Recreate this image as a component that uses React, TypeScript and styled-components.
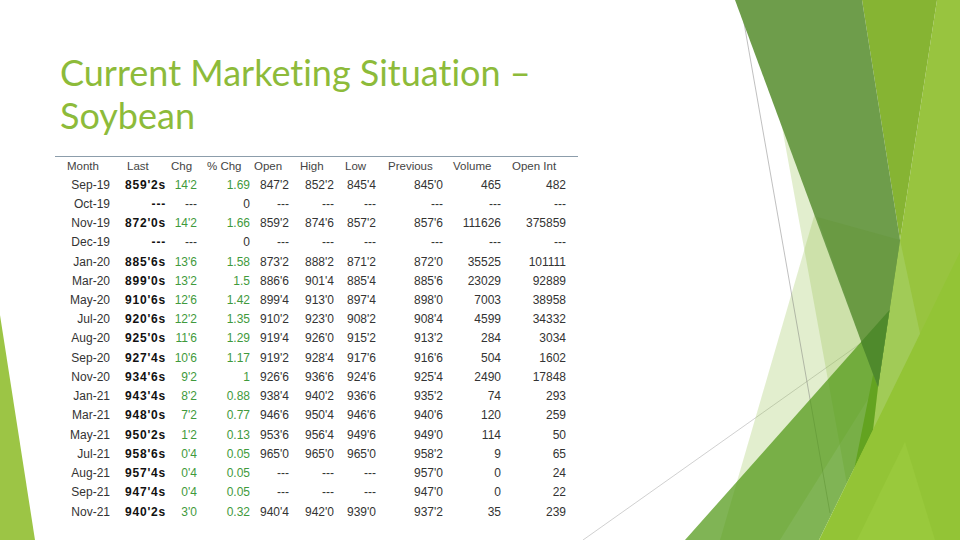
import styled, { createGlobalStyle } from 'styled-components';

const GlobalStyle = createGlobalStyle`
  html, body {
    margin: 0;
    padding: 0;
    background: #ffffff;
  }
  body {
    width: 960px;
    height: 540px;
    overflow: hidden;
  }
`;

// column boundaries measured off the slide: width, header left pad, value right pad
const COLS = [
  { label: 'Month', w: 59, pl: 12, pr: 4 },
  { label: 'Last', w: 54, pl: 13, pr: 2 },
  { label: 'Chg', w: 32, pl: 3, pr: 3 },
  { label: '% Chg', w: 52, pl: 7, pr: 2 },
  { label: 'Open', w: 40, pl: 2, pr: 3 },
  { label: 'High', w: 46, pl: 8, pr: 4 },
  { label: 'Low', w: 42, pl: 7, pr: 4 },
  { label: 'Previous', w: 66, pl: 8, pr: 3 },
  { label: 'Volume', w: 58, pl: 7, pr: 3 },
  { label: 'Open Int', w: 74, pl: 8, pr: 12 },
];

const ROWS: string[][] = [
  ['Sep-19', "859'2s", "14'2", '1.69', "847'2", "852'2", "845'4", "845'0", '465', '482'],
  ['Oct-19', '---', '---', '0', '---', '---', '---', '---', '---', '---'],
  ['Nov-19', "872'0s", "14'2", '1.66', "859'2", "874'6", "857'2", "857'6", '111626', '375859'],
  ['Dec-19', '---', '---', '0', '---', '---', '---', '---', '---', '---'],
  ['Jan-20', "885'6s", "13'6", '1.58', "873'2", "888'2", "871'2", "872'0", '35525', '101111'],
  ['Mar-20', "899'0s", "13'2", '1.5', "886'6", "901'4", "885'4", "885'6", '23029', '92889'],
  ['May-20', "910'6s", "12'6", '1.42', "899'4", "913'0", "897'4", "898'0", '7003', '38958'],
  ['Jul-20', "920'6s", "12'2", '1.35', "910'2", "923'0", "908'2", "908'4", '4599', '34332'],
  ['Aug-20', "925'0s", "11'6", '1.29', "919'4", "926'0", "915'2", "913'2", '284', '3034'],
  ['Sep-20', "927'4s", "10'6", '1.17', "919'2", "928'4", "917'6", "916'6", '504', '1602'],
  ['Nov-20', "934'6s", "9'2", '1', "926'6", "936'6", "924'6", "925'4", '2490', '17848'],
  ['Jan-21', "943'4s", "8'2", '0.88', "938'4", "940'2", "936'6", "935'2", '74', '293'],
  ['Mar-21', "948'0s", "7'2", '0.77', "946'6", "950'4", "946'6", "940'6", '120', '259'],
  ['May-21', "950'2s", "1'2", '0.13', "953'6", "956'4", "949'6", "949'0", '114', '50'],
  ['Jul-21', "958'6s", "0'4", '0.05', "965'0", "965'0", "965'0", "958'2", '9', '65'],
  ['Aug-21', "957'4s", "0'4", '0.05', '---', '---', '---', "957'0", '0', '24'],
  ['Sep-21', "947'4s", "0'4", '0.05', '---', '---', '---', "947'0", '0', '22'],
  ['Nov-21', "940'2s", "3'0", '0.32', "940'4", "942'0", "939'0", "937'2", '35', '239'],
];

const Slide = styled.div`
  position: relative;
  width: 960px;
  height: 540px;
  overflow: hidden;
  background: #ffffff;
`;

const Backdrop = styled.svg`
  position: absolute;
  inset: 0;
  width: 960px;
  height: 540px;
  pointer-events: none;
`;

const Content = styled.div`
  position: relative;
  display: flex;
  flex-direction: column;
  padding: 51px 0 0 55px;
`;

const Title = styled.h1`
  margin: 0 0 19px 5px;
  width: 500px;
  font-family: Lato, 'Open Sans', sans-serif;
  font-weight: 400;
  font-size: 36px;
  line-height: 43px;
  font-variant-ligatures: none;
  color: #8dbb3a;
`;

const Table = styled.div`
  width: 523px;
  border-top: 1.5px solid #8c9dab;
  font-family: 'Liberation Sans', Arial, sans-serif;
`;

const Row = styled.div<{ $head?: boolean }>`
  display: grid;
  grid-template-columns: ${COLS.map((c) => `${c.w}px`).join(' ')};
  height: ${(p) => (p.$head ? '18px' : '19.24px')};
  align-items: center;
  font-size: ${(p) => (p.$head ? '11.5px' : '12px')};
`;

const HeadCell = styled.div<{ $col: number }>`
  padding-left: ${(p) => COLS[p.$col].pl}px;
  color: #444;
  white-space: nowrap;
`;

const Cell = styled.div<{ $col: number; $tone: 'plain' | 'bold' | 'green' }>`
  padding-right: ${(p) => COLS[p.$col].pr}px;
  text-align: right;
  white-space: nowrap;
  color: ${(p) => (p.$tone === 'green' ? '#3f9a3c' : p.$tone === 'bold' ? '#111' : '#333')};
  font-weight: ${(p) => (p.$tone === 'bold' ? 700 : 400)};
  letter-spacing: ${(p) => (p.$tone === 'bold' ? '0.8px' : '0')};
`;

const toneFor = (col: number, value: string): 'plain' | 'bold' | 'green' => {
  if (col === 1) return 'bold';
  if ((col === 2 || col === 3) && value !== '---' && value !== '0') return 'green';
  return 'plain';
};

const Decoration = () => (
  <Backdrop viewBox="0 0 960 540">
    <polygon points="0,315 35,540 0,540" fill="#9cc545" />
    <line x1="583" y1="540" x2="905" y2="312" stroke="#c4c4c4" strokeWidth="0.8" />
    <polygon points="937,0 960,0 960,540 840,540 900,240" fill="#98c43f" />
    <polygon points="862,0 937,0 900,240" fill="#86b433" />
    <polygon points="759,0 862,0 900,240 889.5,310 857,540" fill="rgba(150,195,80,0.28)" />
    <polygon points="840,127 880,380 780,540 720,540" fill="rgba(150,195,80,0.28)" />
    <polygon points="889.5,310 900,240 921,338 873,430 878,387" fill="#a1cb57" />
    <line x1="740" y1="0" x2="830" y2="513" stroke="rgba(110,110,110,0.55)" strokeWidth="0.8" />
    <polygon
      points="685,540 889.5,310 878,387 873,430 819,540"
      fill="rgb(79,151,20)"
      fillOpacity="0.72"
    />
    <polygon points="735,0 862,0 900,240 878,387" fill="#6e9d4b" />
    <polygon points="817,217 900,240 878,387" fill="#6a9a43" />
    <polygon points="861,342 889.5,310 878,387" fill="#4f8a2c" />
    <polygon points="819,540 960,252 960,540" fill="#93c436" />
    <polygon points="857,540 905,442 935,540" fill="#99c93c" />
  </Backdrop>
);

const App = () => (
  <Slide>
    <GlobalStyle />
    <Decoration />
    <Content>
      <Title>Current Marketing Situation – Soybean</Title>
      <Table>
        <Row $head>
          {COLS.map((c, i) => (
            <HeadCell key={c.label} $col={i}>
              {c.label}
            </HeadCell>
          ))}
        </Row>
        {ROWS.map((r) => (
          <Row key={r[0]}>
            {r.map((v, i) => (
              <Cell key={i} $col={i} $tone={toneFor(i, v)}>
                {v}
              </Cell>
            ))}
          </Row>
        ))}
      </Table>
    </Content>
  </Slide>
);

export default App;
